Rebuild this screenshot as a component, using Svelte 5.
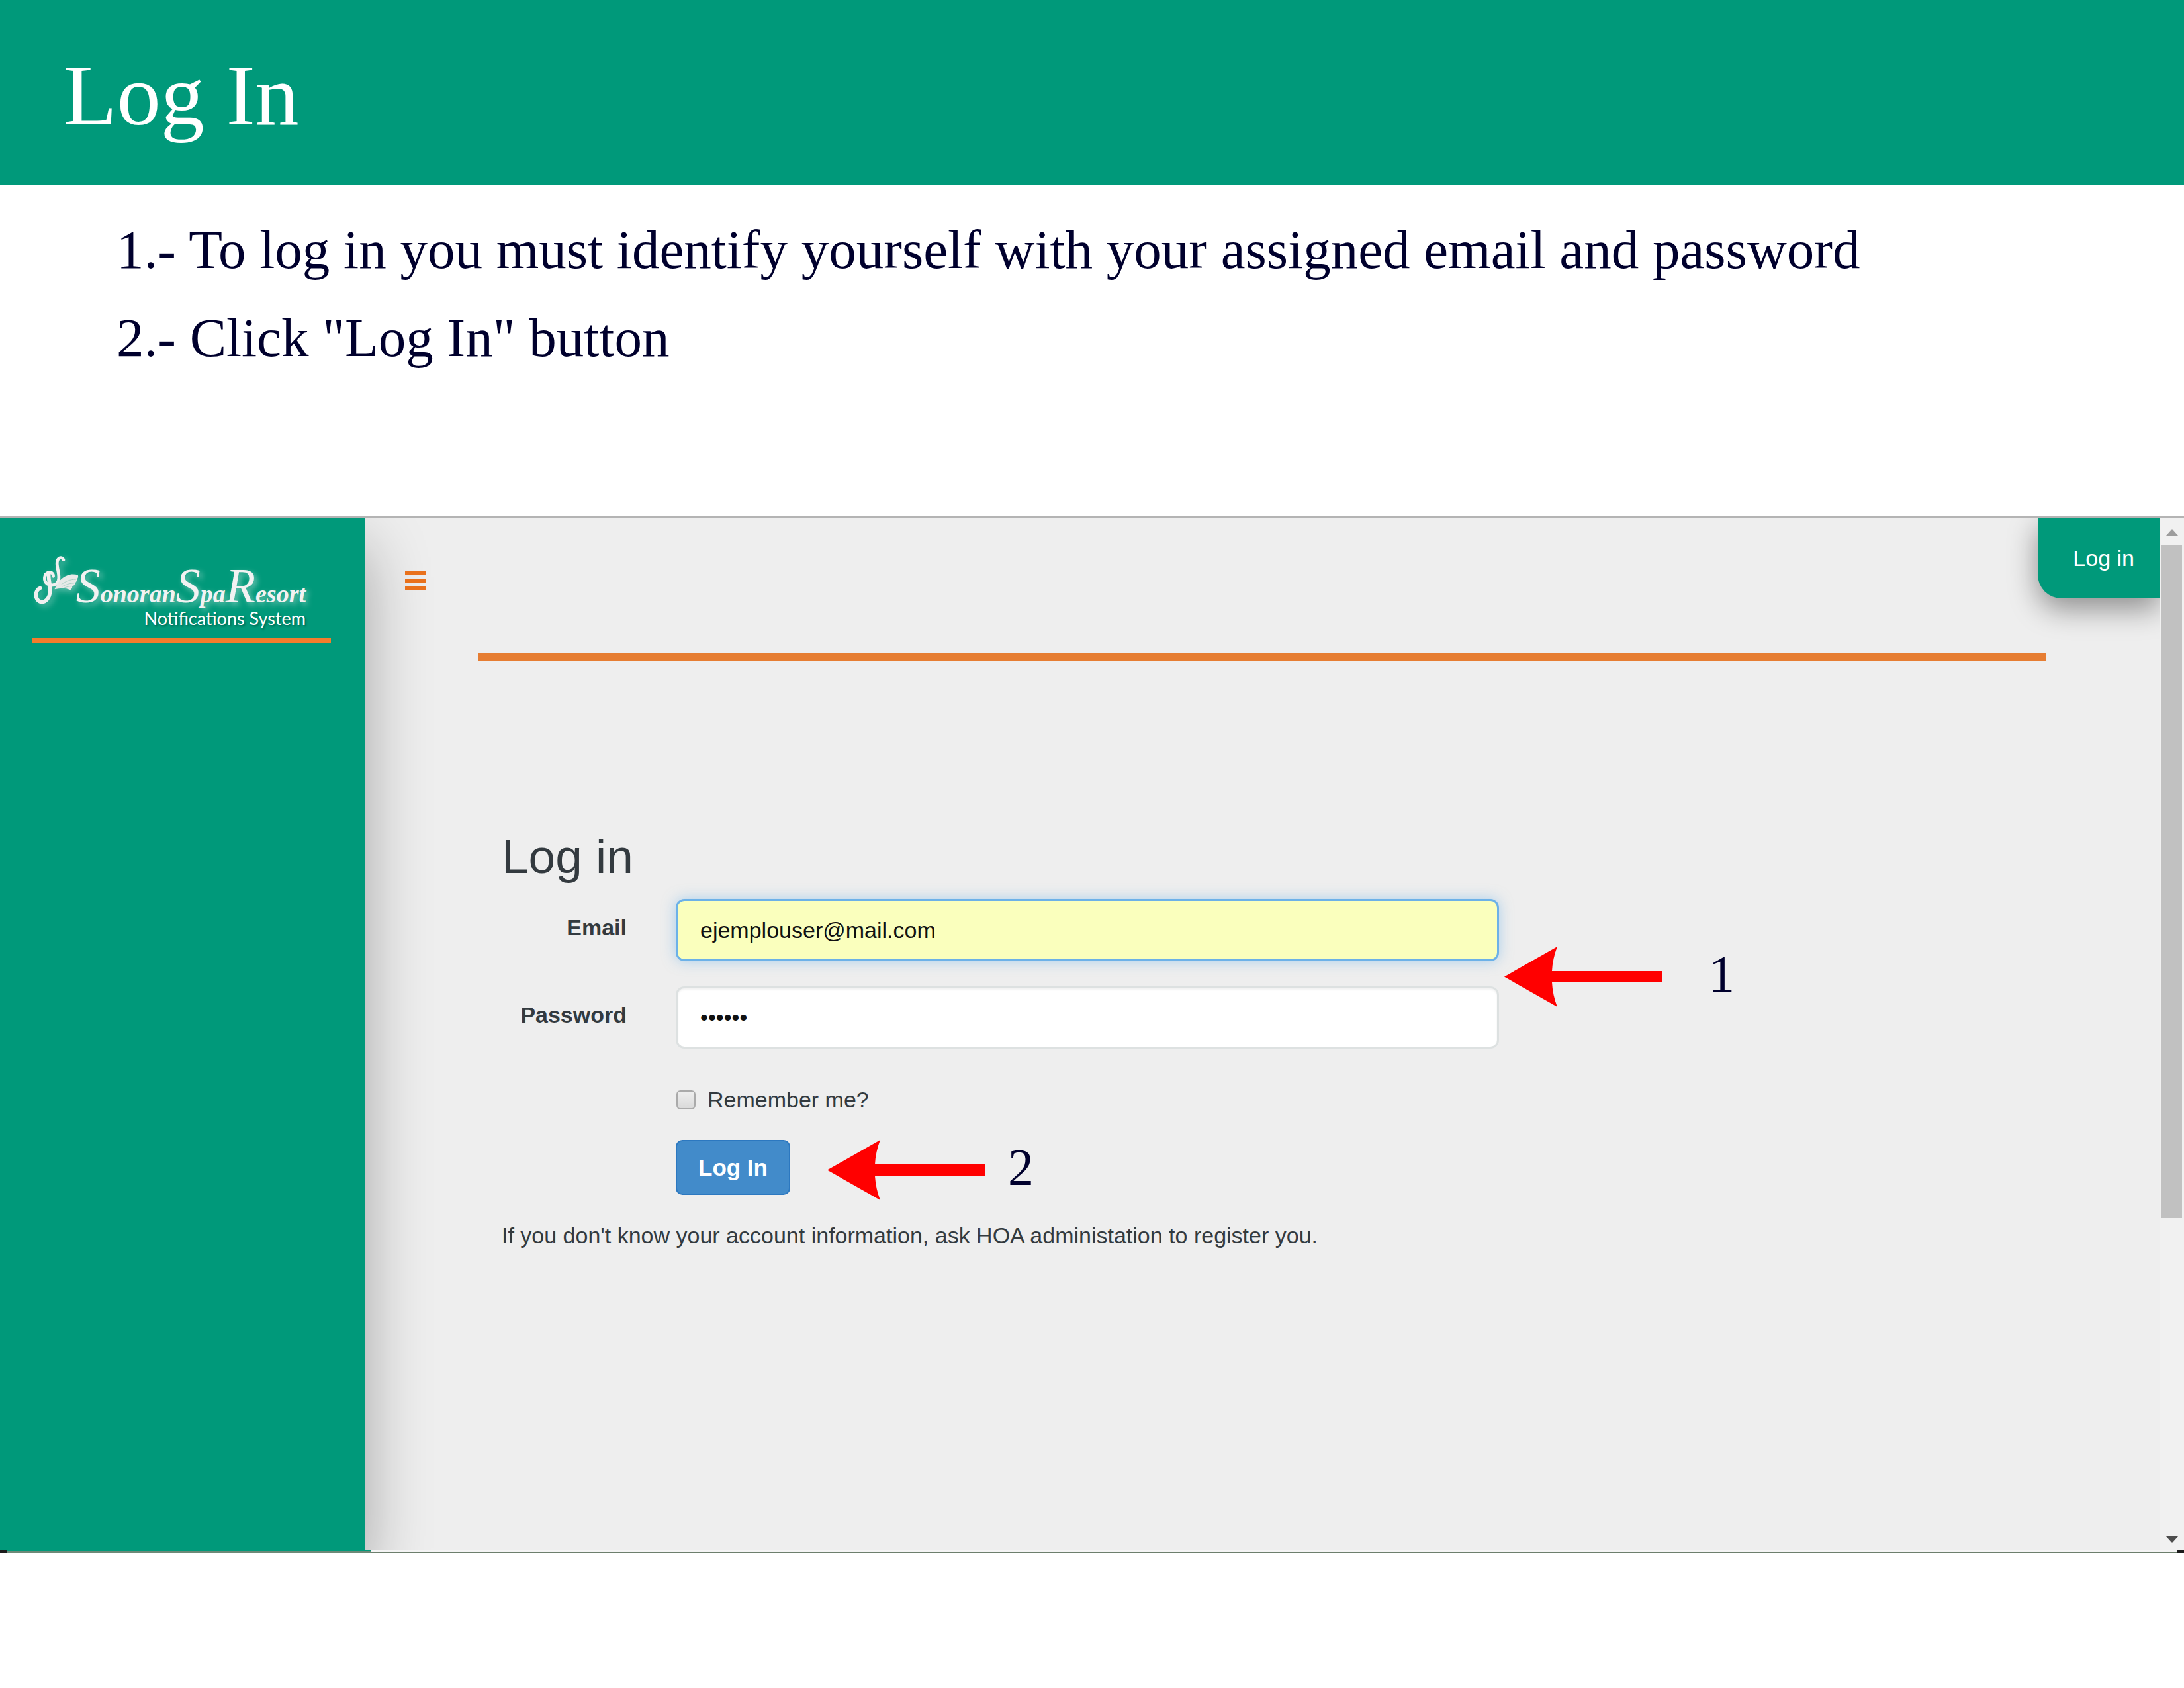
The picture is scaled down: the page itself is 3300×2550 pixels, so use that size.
<script lang="ts">
  let email = $state('ejemplouser@mail.com');
  let password = $state('secret');
  let remember = $state(false);
</script>

{#snippet arrow()}
  <svg class="arrow" viewBox="0 0 239 91" aria-hidden="true">
    <path d="M0 45.5 L80 0 Q73 18 72 37 H239 V54 H72 Q73 73 80 91 Z" fill="#ff0000" />
  </svg>
{/snippet}

<header class="banner"><h1>Log In</h1></header>

<ol class="steps">
  <li>1.- To log in you must identify yourself with your assigned email and password</li>
  <li>2.- Click "Log In" button</li>
</ol>

<section class="window">
  <div class="panes">
    <aside class="sidebar">
      <div class="brand">
        <div class="name">
          <svg class="emblem" viewBox="0 0 70 78" aria-hidden="true">
            <g fill="none" stroke="#f0f0f0" stroke-linecap="round" stroke-width="5">
              <path d="M46 6 C44 1 37 2 36 10 C35 20 41 30 38 39 C35 47 26 48 20 44 C14 39 15 28 23 26 C27 25 30 28 30 32" />
              <path stroke-width="6" d="M23 28 C21 36 26 46 25 56 C24 67 18 73 12 73 C5 73 1 65 3 58 C4 55 6 52 9 51" />
            </g>
            <path
              d="M32 53 C36 43 42 35 52 31 C58 28 64 29 69 30 C70 33 69 35 67 37 C68 39 66 42 64 43 C65 45 63 47 60 48 C60 51 59 53 57 54 C49 50 40 51 32 53 Z"
              fill="#e6eae8"
            />
            <path
              d="M42 46 C49 40 57 37 66 37 M43 49 C50 45 57 43 63 43 M46 51 C51 49 55 48 60 48"
              fill="none"
              stroke="#a9cfc4"
              stroke-width="1"
            />
          </svg>
          <span class="word">Sonoran</span>
          <span class="word">Spa</span>
          <span class="word">Resort</span>
        </div>
        <p class="tagline">Notifications System</p>
      </div>
      <hr class="brand-rule" />
    </aside>

    <main class="main">
      <div class="topbar">
        <button class="menu" type="button" aria-label="Menu">
          <svg viewBox="0 0 32 28"><path d="M0 0H32V6H0ZM0 11H32V17H0ZM0 22H32V28H0Z" fill="#e9711c" /></svg>
        </button>
        <a class="tab" href="#login">Log in</a>
      </div>
      <hr class="main-rule" />

      <form class="login" id="login" onsubmit={(e) => e.preventDefault()}>
        <h2>Log in</h2>
        <div class="fields">
          <label for="email">Email</label>
          <input class="text email" id="email" type="text" bind:value={email} />
          <label for="password">Password</label>
          <input class="text" id="password" type="password" bind:value={password} />
          <div class="callout first">{@render arrow()}<span>1</span></div>
        </div>
        <div class="remember">
          <input id="remember" type="checkbox" bind:checked={remember} />
          <label for="remember">Remember me?</label>
        </div>
        <div class="submit">
          <button class="primary" type="submit">Log In</button>
          <div class="callout second">{@render arrow()}<span>2</span></div>
        </div>
        <p class="hint">If you don't know your account information, ask HOA administation to register you.</p>
      </form>
    </main>

    <div class="scrollbar" aria-hidden="true">
      <svg class="up" viewBox="0 0 18 10"><path d="M9 0 L18 10 H0 Z" fill="#9d9d9d" /></svg>
      <div class="track"><div class="thumb"></div></div>
      <svg class="down" viewBox="0 0 18 10"><path d="M0 0 H18 L9 10 Z" fill="#4d4d4d" /></svg>
    </div>
  </div>
  <div class="edge"><span class="corner"></span><span class="under"></span><span class="rest"></span><span class="corner"></span></div>
</section>

<style>
  :global(body) {
    margin: 0;
    background: #fff;
    font-family: "Liberation Sans", Arial, sans-serif;
    font-size: 34px;
    color: #333a3f;
  }
  h1, h2, p, ol, hr {
    margin: 0;
    padding: 0;
    border: 0;
    font-weight: 400;
  }
  svg { display: block; }
  * { box-sizing: border-box; }

  .banner {
    padding: 8px 96px 0;
    background: #00997a;
    color: #fff;
  }
  h1 {
    font: 132px/272px "Liberation Serif", serif;
  }
  .steps {
    list-style: none;
    padding: 31px 176px 203px;
    font: 83px/133px "Liberation Serif", serif;
    color: #00002d;
  }

  .window { border-top: 2px solid #b4b4b4; }
  .panes {
    display: grid;
    grid-template-columns: 551px minmax(0, 1fr) 37px;
    overflow: hidden;
    background: #eee;
  }

  .sidebar {
    position: relative;
    z-index: 1;
    padding: 56px 51px 0 49px;
    background: #00997a;
    box-shadow: 0 44px 92px rgba(0, 0, 0, 0.32);
  }
  .brand {
    padding: 0 38px 18px 3px;
    color: #f2f2f2;
  }
  .name {
    display: flex;
    align-items: flex-start;
  }
  .emblem {
    width: 70px;
    height: 78px;
    margin-right: -4px;
    filter: drop-shadow(4px 4px 5px rgba(255, 255, 255, 0.35));
  }
  .word {
    display: block;
    padding-top: 10px;
    font: italic bold 38px/38px "Liberation Serif", serif;
    text-shadow: 4px 4px 8px rgba(255, 255, 255, 0.45);
  }
  .word::first-letter {
    font-size: 74px;
    line-height: 74px;
    font-weight: 400;
  }
  .tagline {
    font: 27px/24px Lato, sans-serif;
    text-align: right;
    color: #fff;
    text-shadow: 2px 2px 3px rgba(0, 60, 45, 0.5);
  }
  .brand-rule {
    height: 8px;
    background: #f47c2c;
  }

  .topbar {
    display: flex;
    justify-content: space-between;
    align-items: flex-start;
    height: 205px;
    padding-left: 61px;
  }
  .menu {
    position: relative;
    z-index: 2;
    margin-top: 81px;
    padding: 0;
    border: 0;
    background: none;
  }
  .menu svg { width: 32px; height: 28px; }
  .tab {
    padding: 0 38px 0 53px;
    border-bottom-left-radius: 36px;
    background: #00997a;
    box-shadow: 0 16px 44px rgba(0, 0, 0, 0.4);
    color: #fff;
    line-height: 122px;
    text-decoration: none;
  }
  .main-rule {
    height: 12px;
    margin: 0 171px;
    background: #e67d32;
  }

  .login { padding: 255px 209px 455px 207px; }
  h2 {
    font-size: 73px;
    line-height: 80px;
  }
  .fields {
    position: relative;
    display: grid;
    grid-template-columns: 189px minmax(0, 1fr);
    gap: 38px 74px;
    max-width: 1507px;
    margin-top: 24px;
  }
  .fields label {
    font-weight: 700;
    line-height: 86px;
    text-align: right;
  }
  .text {
    width: 100%;
    height: 94px;
    padding: 0 34px;
    border: 3px solid #dde1e1;
    border-radius: 13px;
    background: #fff;
    color: #111;
    font: inherit;
    outline: 0;
    box-shadow: inset 0 2px 3px rgba(0, 0, 0, 0.06);
  }
  .text.email {
    border-color: #6cb1e8;
    background: #faffbd;
    box-shadow: 0 0 20px rgba(102, 175, 233, 0.5);
  }
  .callout {
    position: absolute;
    left: 100%;
    display: flex;
    align-items: flex-start;
    font: 78px/82px "Liberation Serif", serif;
    color: #00002d;
  }
  .callout.first { top: 72px; gap: 70px; margin-left: 8px; }
  .callout.second { top: 0; gap: 34px; margin-left: 56px; }
  .arrow { width: 239px; height: 91px; }

  .remember {
    display: flex;
    align-items: center;
    gap: 18px;
    margin: 57px 0 41px 264px;
    line-height: 40px;
  }
  .remember input {
    appearance: none;
    width: 29px;
    height: 29px;
    margin: 0;
    border: 2px solid #aaa;
    border-radius: 6px;
    background: linear-gradient(#eee, #dadada);
  }
  .submit {
    position: relative;
    width: fit-content;
    margin-left: 263px;
  }
  .primary {
    display: block;
    height: 83px;
    padding: 0 32px;
    border: 2px solid #2c78c0;
    border-radius: 10px;
    background: #428bca;
    color: #fff;
    font: bold 35px "Liberation Sans", sans-serif;
  }
  .hint {
    margin-top: 41px;
    line-height: 40px;
  }

  .scrollbar {
    position: relative;
    z-index: 2;
    display: flex;
    flex-direction: column;
    align-items: center;
    gap: 14px;
    padding: 17px 0 10px;
    background: #f1f1f1;
  }
  .scrollbar svg { width: 18px; height: 10px; }
  .track {
    flex: 1;
    width: 31px;
  }
  .thumb {
    height: 68.5%;
    background: #c1c1c1;
  }

  .edge {
    display: flex;
    height: 5px;
  }
  .corner {
    width: 11px;
    background: #1b1b1b;
  }
  .under {
    width: 550px;
    background: linear-gradient(#00997a 50%, #6d8a78 50%);
  }
  .rest {
    flex: 1;
    background: linear-gradient(#f4f4f4 60%, #6d7f6d 60%);
  }
</style>
